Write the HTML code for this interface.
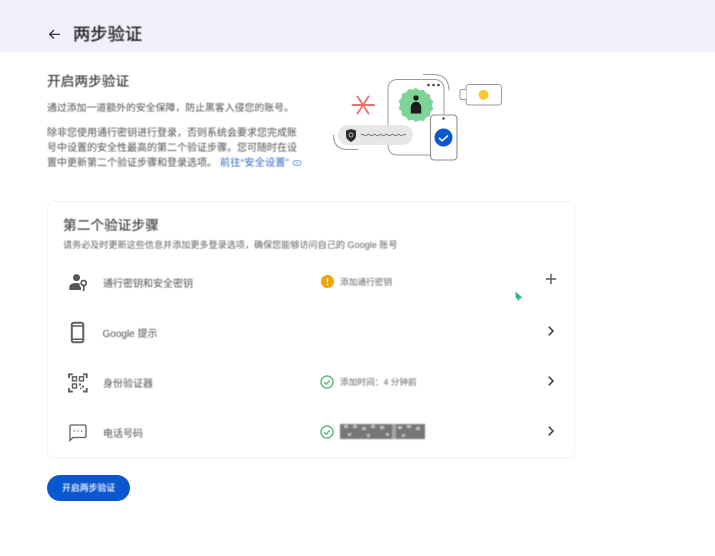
<!DOCTYPE html>
<html lang="zh-CN">
<head>
<meta charset="utf-8">
<title>两步验证</title>
<style>
html,body{margin:0;padding:0;background:#fff}
body{width:715px;height:556px;position:relative;overflow:hidden;font-family:"Liberation Sans","Noto Sans CJK SC",sans-serif;color:#444746}
.t{position:absolute;white-space:nowrap;line-height:1;filter:blur(.45px)}
svg{position:absolute;overflow:visible}
.card{position:absolute;left:47px;top:201px;width:526px;height:256px;border:1px solid #f3f3f3;border-radius:8px;box-sizing:content-box}
</style>
</head>
<body>
<div style="position:absolute;left:0;top:0;width:715px;height:52px;background:#f0f1fb"></div>
<svg style="left:47px;top:27px;filter:blur(.3px)" width="15" height="15" viewBox="0 0 15 15"><path d="M13 7.300H3M7 3L2.800 7.300 7 11.600" fill="none" stroke="#1f1f1f" stroke-width="1.200"/></svg>
<div class="t" style="left:73px;top:26px;font-size:17.300px;color:#1f1f1f;-webkit-text-stroke:.3px #1f1f1f">两步验证</div>

<div class="t" style="left:47px;top:74.500px;font-size:13.700px;color:#2a2a2a;-webkit-text-stroke:.1px #2a2a2a">开启两步验证</div>
<div class="t" style="left:47px;top:104px;font-size:9.900px;color:#4f5251">通过添加一道额外的安全保障，防止黑客入侵您的账号。</div>
<div class="t" style="left:47px;top:129px;font-size:10px;color:#4f5251">除非您使用通行密钥进行登录，否则系统会要求您完成账</div>
<div class="t" style="left:47px;top:143.500px;font-size:10px;color:#4f5251">号中设置的安全性最高的第二个验证步骤。您可随时在设</div>
<div class="t" style="left:47px;top:159px;font-size:10px;color:#4f5251">置中更新第二个验证步骤和登录选项。</div>
<div class="t" style="left:220px;top:159px;font-size:10px;letter-spacing:.35px;color:#2f66c2">前往“安全设置”</div>
<svg style="left:292px;top:158.500px;filter:blur(.3px)" width="10" height="8" viewBox="0 0 10 8"><rect x="1" y="1.700" width="8" height="4.600" rx="2.300" fill="none" stroke="#7c9fd8" stroke-width="1"/><path d="M3.500 4h3" stroke="#7c9fd8" stroke-width=".8"/></svg>

<svg style="left:320px;top:60px;filter:blur(.35px)" width="200" height="110" viewBox="0 0 200 110">
  <rect x="68" y="19.500" width="56" height="75.500" rx="9" fill="#fff" stroke="#9a9d9c" stroke-width="1"/>
  <g fill="none" stroke="#9a9d9c" stroke-width="1.100" stroke-linecap="round">
    <path d="M103.500 14.500h10q15 0 15.500 15.500"/>
    <path d="M13.500 75q0 14.500 14 14.500h10"/>
  </g>
  <circle cx="108.500" cy="25" r="1.300" fill="#444"/><circle cx="113.500" cy="25" r="1.300" fill="#444"/><circle cx="118.500" cy="25" r="1.300" fill="#444"/>
  <path d="M96 30l3.500 2.200 4.100-.6 2.400 3.400 3.900 1.400.5 4.100 2.900 3-1.400 3.800 1.400 3.800-2.900 3-.5 4.100-3.900 1.400-2.400 3.400-4.100-.6L96 64l-3.500-2.200-4.100.6-2.400-3.400-3.900-1.400-.5-4.100-2.900-3 1.400-3.800-1.400-3.800 2.900-3 .5-4.100 3.900-1.400 2.400-3.400 4.100.6z" transform="translate(0 -2)" fill="#7ed496"/>
  <circle cx="96" cy="38" r="2.700" fill="#1b1b1b"/>
  <path d="M90.800 53.500v-6.500a5.200 5.200 0 0 1 10.400 0v6.500z" fill="#1b1b1b"/>
  <g stroke="#e9736a" stroke-width="1.900" stroke-linecap="round" fill="none">
    <path d="M32.500 45h21.500M37.500 36.500l11 17M48.500 36.500l-11 17"/>
  </g>
  <rect x="18" y="65" width="75" height="20" rx="10" fill="#e6e7e7"/>
  <path d="M31 69l5 1.500v5q0 4-5 6.500q-5-2.500-5-6.500v-5z" fill="#2c2c2c"/>
  <circle cx="31" cy="75" r="2" fill="none" stroke="#bbb" stroke-width=".9"/>
  <path d="M41 75q1.500-1.500 3 0t3 0 3 0 3 0 3 0 3 0 3 0 3 0 3 0 3 0 3 0 3 0 3 0 3 0 3 0" fill="none" stroke="#777" stroke-width=".9"/>
  <rect x="110.500" y="55" width="26.500" height="45" rx="3.500" fill="#fff" stroke="#8d908f" stroke-width="1.100"/>
  <circle cx="123.500" cy="58.500" r="1.200" fill="#333"/>
  <circle cx="123.500" cy="77.500" r="9" fill="#0b57d0"/>
  <path d="M119 78l3.200 2.800 5.800-5.300" fill="none" stroke="#fff" stroke-width="1.500"/>
  <rect x="146" y="24.500" width="35.500" height="20.500" rx="3" fill="#fff" stroke="#9a9d9c" stroke-width="1"/>
  <path d="M146 29.500h-4q-2 0-2 2v6q0 2 2 2h4" fill="#fff" stroke="#9a9d9c" stroke-width="1"/>
  <circle cx="163.500" cy="34.800" r="5" fill="#fcc934"/>
</svg>

<div class="card"></div>
<div class="t" style="left:63px;top:218.500px;font-size:13.700px;color:#333;-webkit-text-stroke:.1px #333">第二个验证步骤</div>
<div class="t" style="left:63px;top:240.500px;font-size:9.100px;color:#5f6261">请务必及时更新这些信息并添加更多登录选项，确保您能够访问自己的 Google 账号</div>

<svg style="left:68px;top:272px;filter:blur(.3px)" width="20" height="20" viewBox="0 0 20 20" fill="#555857">
  <circle cx="8.500" cy="5.600" r="3.500"/>
  <path d="M1.300 18v-2.700c0-2.900 3-4.300 6.700-4.300 1.500 0 2.700.2 3.700.6-.3 1.500.2 3 1.300 4V18z"/>
  <circle cx="15.700" cy="11" r="2.500" fill="none" stroke="#555857" stroke-width="1.700"/>
  <path d="M14.900 13.200h1.700v4.800l-.9 1.700-.8-1.200z"/>
</svg>
<div class="t" style="left:103px;top:280px;font-size:10px;color:#4f5251">通行密钥和安全密钥</div>
<svg style="left:320.500px;top:274.500px;filter:blur(.3px)" width="13" height="13" viewBox="0 0 13 13"><circle cx="6.500" cy="6.500" r="6.500" fill="#eea311"/><path d="M6.500 2.900v4.300" stroke="#fff" stroke-width="1.300"/><circle cx="6.500" cy="9.300" r=".8" fill="#fff"/></svg>
<div class="t" style="left:340px;top:278px;font-size:8.700px;color:#666">添加通行密钥</div>
<svg style="left:545px;top:273px;filter:blur(.3px)" width="12" height="12" viewBox="0 0 12 12"><path d="M6 .8v10.400M.8 6h10.400" stroke="#555857" stroke-width="1.400"/></svg>
<svg style="left:515px;top:291px;filter:blur(.3px)" width="8" height="11" viewBox="0 0 8 11"><path d="M.5.500L7.500 7 4.500 7.300 4.200 10.500 2 7.500.8 7.500z" fill="#2db38d"/></svg>

<svg style="left:70px;top:321px;filter:blur(.3px)" width="15" height="23" viewBox="0 0 15 23"><rect x="1.800" y="1.800" width="11.500" height="19.500" rx="1.800" fill="none" stroke="#5e6160" stroke-width="2"/><path d="M1 5h13M1 18.200h13" stroke="#5e6160" stroke-width="1.500"/></svg>
<div class="t" style="left:102.500px;top:328px;font-size:10px;color:#4f5251;transform:translateY(2px)">Google 提示</div>
<svg style="left:546px;top:324.500px;filter:blur(.3px)" width="10" height="12" viewBox="0 0 10 12"><path d="M2.800 1.700L7 6 2.800 10.300" fill="none" stroke="#3f4241" stroke-width="1.600"/></svg>

<svg style="left:68px;top:373px;filter:blur(.35px)" width="20" height="20" viewBox="0 0 20 20" fill="none" stroke="#5e6160">
  <path stroke-width="1.900" d="M1 5V1.300h3.800M15 1.300H18.700V5M1 15v3.500h3.800M18.700 15v3.500H15"/>
  <g stroke-width="1.400"><rect x="4.500" y="3.800" width="4" height="4"/><rect x="11.500" y="3.800" width="4" height="4"/><rect x="4.500" y="11" width="4" height="4"/></g>
  <path d="M11 10.500h2v2h-2zM14 12.500h2v2h-2zM12 14.500h1.500v1.500H12z" fill="#5e6160" stroke="none"/>
</svg>
<div class="t" style="left:103px;top:380px;font-size:10px;color:#4f5251">身份验证器</div>
<svg style="left:320px;top:375px;filter:blur(.25px)" width="14" height="14" viewBox="0 0 14 14"><circle cx="7" cy="7" r="6" fill="none" stroke="#66b884" stroke-width="1.500"/><path d="M4.200 7.200l2 2 3.700-4" fill="none" stroke="#66b884" stroke-width="1.500"/></svg>
<div class="t" style="left:340px;top:378px;font-size:8.700px;color:#666">添加时间：4 分钟前</div>
<svg style="left:546px;top:375px;filter:blur(.3px)" width="10" height="12" viewBox="0 0 10 12"><path d="M2.800 1.700L7 6 2.800 10.300" fill="none" stroke="#3f4241" stroke-width="1.600"/></svg>

<svg style="left:68.500px;top:424px;filter:blur(.3px)" width="18" height="17" viewBox="0 0 18 17"><path d="M2 1h13.500q1.500 0 1.500 1.500v9.500q0 1.500-1.500 1.500H4l-3 3V2Q1 1 2 1z" fill="none" stroke="#5e6160" stroke-width="1.300"/><g fill="#777"><circle cx="5.500" cy="7" r=".8"/><circle cx="9" cy="7" r=".8"/><circle cx="12.500" cy="7" r=".8"/></g></svg>
<div class="t" style="left:103px;top:430px;font-size:10px;color:#4f5251">电话号码</div>
<svg style="left:320px;top:425px;filter:blur(.25px)" width="14" height="14" viewBox="0 0 14 14"><circle cx="7" cy="7" r="6" fill="none" stroke="#66b884" stroke-width="1.500"/><path d="M4.200 7.200l2 2 3.700-4" fill="none" stroke="#66b884" stroke-width="1.500"/></svg>
<svg style="left:340px;top:424px;filter:blur(.9px)" width="85" height="15" viewBox="0 0 85 15">
  <rect width="85" height="15" fill="#767676"/>
  <g fill="#c4c4c4">
    <rect x="4" y="1" width="4" height="3"/><rect x="13" y="1" width="4" height="3"/><rect x="22" y="3" width="4" height="3"/><rect x="31" y="1" width="4" height="3"/><rect x="40" y="2" width="4" height="3"/><rect x="58" y="2" width="4" height="3"/><rect x="67" y="1" width="4" height="3"/><rect x="76" y="3" width="4" height="3"/>
    <rect x="8" y="9" width="3" height="3"/><rect x="27" y="10" width="3" height="3"/><rect x="46" y="9" width="3" height="3"/><rect x="62" y="10" width="3" height="3"/>
    <rect x="52" y="0" width="4" height="15" opacity=".6"/>
  </g>
</svg>
<svg style="left:546px;top:425px;filter:blur(.3px)" width="10" height="12" viewBox="0 0 10 12"><path d="M2.800 1.700L7 6 2.800 10.300" fill="none" stroke="#3f4241" stroke-width="1.600"/></svg>

<div style="position:absolute;left:47px;top:475px;width:83px;height:26px;border-radius:13px;background:#0b57d0"></div>
<div class="t" style="left:62px;top:484px;font-size:8.900px;color:#fff;font-weight:500">开启两步验证</div>
</body>
</html>
